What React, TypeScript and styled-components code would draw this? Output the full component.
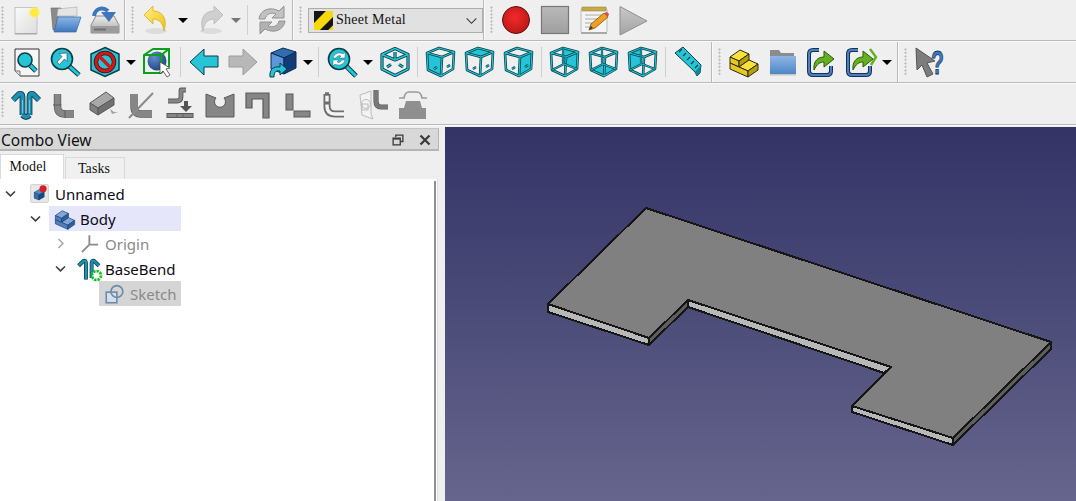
import React from "react";
import styled, { createGlobalStyle } from "styled-components";

const Global = createGlobalStyle`
	html, body {
		margin: 0;
		padding: 0;
		background: #efefef;
		overflow: hidden;
	}
	#root {
		width: 1076px;
		height: 501px;
	}
`

const Page = styled.div`
	width: 1076px;
	height: 501px;
	display: flex;
	flex-direction: column;
	background: #efefef;
	font-family: "Noto Sans", sans-serif;
	overflow: hidden;
`

const Row = styled.div<{ $h?: number }>`
	height: ${p => p.$h || 42}px;
	flex: none;
	display: flex;
	align-items: stretch;
	box-sizing: border-box;
	padding-bottom: 2px;
	box-shadow: inset 0 -1px 0 #fafafa, inset 0 -2px 0 #b9b9b9;
`

const Section = styled.div<{ $end?: number; $first?: boolean }>`
	display: flex;
	align-items: center;
	padding-left: ${p => p.$first ? 0 : 5}px;
	padding-right: ${p => p.$end || 0}px;
	border-right: ${p => p.$end !== undefined ? "1px solid #b9b9b9" : "none"};
	box-shadow: ${p => p.$end !== undefined ? "1px 0 0 #fafafa" : "none"};
`

const Handle = styled.div`
	width: 3px;
	height: 28px;
	margin: 0 3px 0 1px;
	flex: none;
	background-image: radial-gradient(circle at 1.5px 1.5px, #bdbdbd 1px, transparent 1.2px);
	background-size: 3px 3.5px;
`

const Slot = styled.div`
	width: 39px;
	height: 32px;
	flex: none;
	display: flex;
	align-items: center;
	justify-content: center;
`

const TightRow = styled(Row)`
	${Slot} {
		width: 38.7px;
	}
`

const Caret = styled.div<{ $off?: boolean }>`
	width: 14px;
	flex: none;
	display: flex;
	justify-content: center;
	&::before {
		content: "";
		border-left: 5px solid transparent;
		border-right: 5px solid transparent;
		border-top: 5px solid ${p => p.$off ? "#777" : "#000"};
	}
`

const Sep = styled.div<{ $wide?: boolean }>`
	width: 1px;
	height: 30px;
	flex: none;
	background: #cfcfcf;
	margin: 0 ${p => p.$wide ? 5 : 3}px 0 ${p => p.$wide ? 4 : 3}px;
`

const Combo = styled.div`
	width: 175px;
	height: 25px;
	margin-left: 3px;
	box-sizing: border-box;
	display: flex;
	align-items: center;
	gap: 3px;
	padding: 0 5px;
	background: #e1e1e1;
	border: 1px solid #adadad;
	font: 14px "Liberation Serif", serif;
	letter-spacing: 0.25px;
	color: #111;
`

const ComboText = styled.span`
	flex: 1;
`

const Main = styled.div`
	flex: 1;
	display: flex;
	min-height: 0;
`

const Dock = styled.div`
	width: 445px;
	flex: none;
	display: flex;
	flex-direction: column;
	padding-top: 2px;
	box-sizing: border-box;
`

const DockTitle = styled.div`
	width: 439px;
	height: 23px;
	box-sizing: border-box;
	flex: none;
	display: flex;
	align-items: center;
	background: #d8d8d8;
	border-right: 1px solid #b4b4b4;
	border-bottom: 2px solid #b4b4b4;
	border-top: 1px solid #c4c4c4;
	padding: 1px 0 0 1px;
	font-size: 15.5px;
	color: #111;
`

const DockName = styled.span`
	flex: 1;
`

const DockButton = styled.div`
	width: 27px;
	display: flex;
	justify-content: center;
`

const Tabs = styled.div`
	height: 28px;
	width: 438px;
	flex: none;
	display: flex;
	align-items: flex-end;
	font: 14px "Liberation Serif", serif;
	letter-spacing: 0.1px;
	color: #111;
`

const Tab = styled.div<{ $on?: boolean }>`
	box-sizing: border-box;
	width: ${p => p.$on ? 64 : 60}px;
	height: ${p => p.$on ? 25 : 22}px;
	margin-left: ${p => p.$on ? 0 : 1}px;
	padding-right: ${p => p.$on ? 8 : 2}px;
	display: flex;
	align-items: center;
	justify-content: center;
	background: ${p => p.$on ? "#fff" : "#f0f0f0"};
	border: 1px solid #d9d9d9;
	border-bottom: none;
`

const Tree = styled.div`
	flex: 1;
	width: 438px;
	box-sizing: border-box;
	background: #fff;
	border-right: 1px solid #dedede;
	display: flex;
	justify-content: space-between;
	padding-top: 2px;
`

const TreeList = styled.div`
	width: 181px;
	display: flex;
	flex-direction: column;
	font-size: 15px;
`

const ScrollLine = styled.div`
	width: 2px;
	margin-right: 1px;
	background: #8f8f8f;
`

const TreeRow = styled.div<{ $depth: number }>`
	height: 25px;
	display: flex;
	align-items: center;
	padding-left: ${p => p.$depth * 25}px;
`

const Arrow = styled.div`
	width: 24px;
	flex: none;
	display: flex;
	justify-content: center;
	padding-right: 3px;
	box-sizing: border-box;
`

const Item = styled.div<{ $tone?: string; $dim?: boolean }>`
	flex: 1;
	height: 25px;
	display: flex;
	align-items: center;
	white-space: nowrap;
	background: ${p => p.$tone || "transparent"};
	color: ${p => p.$dim ? "#8a8a8a" : "#0c0c14"};
`

const ItemIcon = styled.div`
	width: 31px;
	flex: none;
	display: flex;
	justify-content: center;
`

const View = styled.div`
	flex: 1;
	margin-top: 1px;
	background: linear-gradient(#333366, #65658d);
`

const ViewSvg = styled.svg`
	width: 100%;
	height: 100%;
	display: block;
`

const Svg = styled.svg.attrs({ viewBox: "0 0 32 32" })<{ $s?: number }>`
	width: ${p => p.$s || 32}px;
	height: ${p => p.$s || 32}px;
	display: block;
	flex: none;
	overflow: visible;
`

const TEAL = "#25c4d6"
const DARK = "#0b3f48"
const GRAY = "#868686"
const GRAY_D = "#5a5a5a"

// two stroke passes give the outlined pipes the icon set is made of
const Pipe = ({ d, c = TEAL, o = DARK, w = 2, e = 1.8 }: { d: string; c?: string; o?: string; w?: number; e?: number }) => (
	<>
		<path d={d} fill="none" stroke={o} strokeWidth={w + e} strokeLinejoin="round" />
		<path d={d} fill="none" stroke={c} strokeWidth={w} strokeLinejoin="round" />
	</>
)

const NewIcon = () => (
	<Svg>
		<defs>
			<linearGradient id="newPage" x1="0" y1="0" x2="1" y2="1">
				<stop offset="0" stopColor="#fafafa" />
				<stop offset="1" stopColor="#dedede" />
			</linearGradient>
			<radialGradient id="newGlow">
				<stop offset="0" stopColor="#ffef3a" />
				<stop offset="0.55" stopColor="#ffe93a" />
				<stop offset="1" stopColor="#fff3a0" stopOpacity="0" />
			</radialGradient>
		</defs>
		<rect x="4" y="3.5" width="22" height="26" fill="url(#newPage)" stroke="#c4c4c4" />
		<rect x="4" y="29" width="22" height="1.5" fill="#aaa" />
		<circle cx="23.5" cy="8.5" r="6.5" fill="url(#newGlow)" />
	</Svg>
)

const OpenIcon = () => (
	<Svg>
		<defs>
			<linearGradient id="openBlue" x1="0" y1="0" x2="0" y2="1">
				<stop offset="0" stopColor="#8bb8ea" />
				<stop offset="1" stopColor="#3f76bd" />
			</linearGradient>
		</defs>
		<path d="M1,4 H11 L13,7 H24 V12 H8 L5,26 H3 Z" fill="#8a8a8a" stroke="#666" strokeWidth="0.6" />
		<path d="M8,5 L27,3 L27,12 L7,12 Z" fill="#e4e4e4" stroke="#aaa" strokeWidth="0.6" />
		<path d="M8,13 H31 L26,28 H4 Z" fill="url(#openBlue)" stroke="#3a6aa8" strokeWidth="0.7" />
	</Svg>
)

const SaveIcon = () => (
	<Svg>
		<defs>
			<linearGradient id="saveBase" x1="0" y1="0" x2="0" y2="1">
				<stop offset="0" stopColor="#ececec" />
				<stop offset="1" stopColor="#a8a8a8" />
			</linearGradient>
		</defs>
		<path d="M2,21 L7,12 H25 L30,21 V29 H2 Z" fill="url(#saveBase)" stroke="#8c8c8c" />
		<rect x="2.5" y="22" width="27" height="7" fill="#9c9c9c" />
		<rect x="5" y="24.5" width="12" height="2" fill="#6f6f6f" />
		<path d="M5,12 C6,5 13,2 19,7" fill="none" stroke="#3e76bb" strokeWidth="4" />
		<polygon points="12,8 27,8 20,18" fill="#3e76bb" />
	</Svg>
)

const CurlArrow = ({ fill, line, flip }: { fill: string; line: string; flip?: boolean }) => (
	<g transform={flip ? "matrix(-1 0 0 1 32 0)" : undefined}>
		<ellipse cx="15" cy="27" rx="11" ry="3" fill="#000" opacity="0.08" />
		<path d="M3,11 L12,2 V7 C21,7 27,14 23,27 C22,19 18,15 12,15 V20 Z" fill={fill} stroke={line} strokeWidth="0.8" />
	</g>
)

const UndoIcon = () => (
	<Svg>
		<defs>
			<linearGradient id="undoFill" x1="0" y1="0" x2="1" y2="1">
				<stop offset="0" stopColor="#fff08a" />
				<stop offset="1" stopColor="#f0c010" />
			</linearGradient>
		</defs>
		<CurlArrow fill="url(#undoFill)" line="#d8b020" />
	</Svg>
)

const RedoIcon = () => (
	<Svg>
		<CurlArrow fill="#cfcfcf" line="#b8b8b8" flip />
	</Svg>
)

const RefreshIcon = () => {
	const d = "M2,15 C3,6 13,2 22,7 L27,2 V14 H15 L19,10 C14,8 9,10 8,15 Z"
	return (
		<Svg>
			<path d={d} fill="#c2c2c2" stroke="#929292" />
			<path d={d} fill="#b2b2b2" stroke="#929292" transform="rotate(180 15 16)" />
		</Svg>
	)
}

const HazardIcon = () => (
	<Svg $s={19}>
		<rect width="32" height="32" fill="#f5d90a" />
		<polygon points="0,0 20,0 0,20" fill="#151515" />
		<polygon points="32,10 32,32 10,32" fill="#151515" />
		<polygon points="32,24 32,32 24,32" fill="#f5d90a" />
	</Svg>
)

const ChevronIcon = () => (
	<Svg $s={11}>
		<path d="M2,10 L16,24 L30,10" fill="none" stroke="#333" strokeWidth="3" />
	</Svg>
)

const RecordIcon = () => (
	<Svg>
		<defs>
			<radialGradient id="rec" cx="0.45" cy="0.4" r="0.7">
				<stop offset="0" stopColor="#f02a2a" />
				<stop offset="1" stopColor="#b81414" />
			</radialGradient>
		</defs>
		<circle cx="16" cy="16" r="13.5" fill="url(#rec)" stroke="#5a1010" />
	</Svg>
)

const StopIcon = () => (
	<Svg>
		<defs>
			<linearGradient id="stopFill" x1="0" y1="0" x2="0" y2="1">
				<stop offset="0" stopColor="#b9b9b9" />
				<stop offset="1" stopColor="#9f9f9f" />
			</linearGradient>
		</defs>
		<rect x="2.5" y="2.5" width="27" height="27" fill="url(#stopFill)" stroke="#777" strokeWidth="1.2" />
	</Svg>
)

const MacroIcon = () => (
	<Svg>
		<rect x="3" y="4" width="26" height="25" rx="2" fill="#f4f4f4" stroke="#bbb" />
		<rect x="3" y="28" width="26" height="2" fill="#a8a8a8" />
		<rect x="4" y="3" width="24" height="4" fill="#c9a84a" stroke="#8f7a30" strokeWidth="0.5" />
		<path d="M7,11 H24 M7,15 H20 M7,19 H14 M7,23 H12" stroke="#aaa" strokeWidth="1.2" />
		<path d="M11,26 L13,20 L26,9 L30,13 L17,24 Z" fill="#f0a020" stroke="#7a5410" strokeWidth="0.8" />
		<path d="M26,9 L30,13 L31,10 L29,8 Z" fill="#d85050" />
		<path d="M11,26 L13,22 L15,24 Z" fill="#333" />
	</Svg>
)

const PlayIcon = () => (
	<Svg>
		<defs>
			<linearGradient id="playFill" x1="0" y1="0" x2="0" y2="1">
				<stop offset="0" stopColor="#c8c8c8" />
				<stop offset="1" stopColor="#a4a4a4" />
			</linearGradient>
		</defs>
		<polygon points="3,2.5 30,17 3,31" fill="url(#playFill)" stroke="#8f8f8f" />
	</Svg>
)

const Lens = ({ cx, cy, r, to }: { cx: number; cy: number; r: number; to: number }) => (
	<>
		<path d={`M${cx + r * 0.7},${cy + r * 0.7} L${to},${to}`} stroke={DARK} strokeWidth="5" />
		<path d={`M${cx + r * 0.7},${cy + r * 0.7} L${to},${to}`} stroke={TEAL} strokeWidth="3" />
		<circle cx={cx} cy={cy} r={r} fill={TEAL} stroke={DARK} strokeWidth="1.6" />
	</>
)

const ZoomPageIcon = () => (
	<Svg>
		<path d="M4,3 H28 V30 H9 L4,25 Z" fill="#f6f6f6" stroke="#333" />
		<path d="M4,25 H9 V30" fill="#ddd" stroke="#777" />
		<Lens cx={14} cy={14} r={7} to={25} />
	</Svg>
)

const ZoomArrowIcon = () => (
	<Svg>
		<Lens cx={12} cy={13} r={10.5} to={29} />
		<path d="M17,7 V15.5 L14.5,13 L9.5,18.5 L7,16 L12,10.5 L9,7.5 Z" fill="#fff" stroke="#334" strokeWidth="0.6" />
	</Svg>
)

const NoDrawIcon = () => (
	<Svg>
		<polygon points="16,1.5 30,8 30,24 16,30.5 2,24 2,8" fill={TEAL} stroke={DARK} strokeWidth="1.5" />
		<circle cx="16" cy="16" r="9" fill="none" stroke="#3a1414" strokeWidth="4.4" />
		<circle cx="16" cy="16" r="9" fill="none" stroke="#d01818" strokeWidth="3" />
		<path d="M10,10 L22,22" stroke="#d01818" strokeWidth="3.4" />
	</Svg>
)

const BoxSelectIcon = () => (
	<Svg>
		<defs>
			<radialGradient id="ball" cx="0.35" cy="0.3" r="0.8">
				<stop offset="0" stopColor="#5f8fd0" />
				<stop offset="1" stopColor="#1c3f7a" />
			</radialGradient>
		</defs>
		<circle cx="15" cy="15" r="9.5" fill="url(#ball)" />
		<path d="M2,9 L11,3 H27 V20 L19,27 H2 Z M2,9 H19 V27 M19,9 L27,3" fill="none" stroke="#0aa01a" strokeWidth="2" />
		<polygon points="18,16 18,28 21,25 25,31 28,29 24,23 28,22" fill="#fff" stroke="#444" strokeWidth="0.8" />
	</Svg>
)

const BackIcon = () => (
	<Svg>
		<polygon points="2,16 16,3 16,10 30,10 30,21 16,21 16,29" fill={TEAL} stroke={DARK} strokeWidth="1" />
	</Svg>
)

const ForwardIcon = () => (
	<Svg>
		<polygon points="30,16 16,3 16,10 2,10 2,21 16,21 16,29" fill="#b8b8b8" stroke="#9c9c9c" />
	</Svg>
)

const CubeSwapIcon = () => (
	<Svg>
		<polygon points="5,7 17,2 30,6 18,12" fill="#2f6db0" stroke="#0c2a55" />
		<polygon points="5,7 18,12 18,28 5,23" fill="#5d97da" stroke="#0c2a55" />
		<polygon points="18,12 30,6 30,22 18,28" fill="#123c78" stroke="#0c2a55" />
		<path d="M4,31 C3,23 8,20 14,21 V17 L21,23 L14,29 V25 C10,24 8,26 8,31 Z" fill={TEAL} stroke={DARK} />
	</Svg>
)

const ZoomRefreshIcon = () => (
	<Svg>
		<Lens cx={13} cy={13} r={10.5} to={30} />
		<path d="M7,12 C8,7 14,6 17,8 L19,6 V12 H13 L15,10 C13,9 11,10 10,12 Z" fill="#fff" stroke="#244" strokeWidth="0.4" />
		<path d="M19,14 C18,19 12,20 9,18 L7,20 V14 H13 L11,16 C13,17 15,16 16,14 Z" fill="#fff" stroke="#244" strokeWidth="0.4" />
	</Svg>
)

const IsoCubeIcon = () => (
	<Svg>
		<Pipe d="M16,2.5 L29,8.5 V23 L16,29.5 L3,23 V8.5 Z M3,8.5 L16,14 L29,8.5 M16,14 V6" w={1.4} />
		<Pipe d="M8,21 L12,18.5 M24,21 L20,18.5" w={1.4} />
	</Svg>
)

type Face = "front" | "top" | "right" | "rear" | "bottom" | "left"

const FACES: Record<Face, string> = {
	front: "2,7 17,11 16,30 3,24",
	top: "2,7 14,2 29,6 17,11",
	right: "17,11 29,6 28,23 16,30",
	rear: "14,2 29,6 28,23 15,18",
	bottom: "3,24 15,18 28,23 16,30",
	left: "2,7 14,2 15,18 3,24",
}

const CubeFaceIcon = ({ face }: { face: Face }) => {
	const back = face === "front" || face === "top" || face === "right"
	return (
		<Svg>
			<polygon points={FACES[face]} fill={TEAL} />
			<Pipe d="M2,7 L14,2 L29,6 L28,23 L16,30 L3,24 Z M2,7 L17,11 L29,6 M17,11 L16,30" w={1.1} e={1.5} />
			{back
				? <Pipe d="M22,21 L25,19 M9,23 L12,21" w={1} e={1.4} />
				: <Pipe d="M14,2 V18 M3,24 L15,18 L28,23" w={1} e={1.2} />}
		</Svg>
	)
}

const RulerIcon = () => (
	<Svg>
		<polygon points="2,7 10,1 28,19 27,27 24,30 22,26" fill={TEAL} stroke={DARK} />
		<path d="M9,3 L6,6 M13,7 L10,10 M17,11 L14,14 M21,15 L18,18 M25,19 L22,22" stroke={DARK} strokeWidth="1.2" />
		<polygon points="22,26 28,19 27,27 24,30" fill="#0e8796" />
	</Svg>
)

const PartIcon = ({ s, top = "#f6e23a", left = "#e6c820", right = "#b89f10", line = "#2a2a10" }: {
	s?: number; top?: string; left?: string; right?: string; line?: string
}) => (
	<Svg $s={s}>
		<polygon points="2,11 12,4 21,8 11,15" fill={top} stroke={line} />
		<polygon points="2,11 11,15 11,21 2,17" fill={left} stroke={line} />
		<polygon points="11,15 21,8 21,14 11,21" fill={right} stroke={line} />
		<polygon points="11,21 21,14 30,18 20,25" fill={top} stroke={line} />
		<polygon points="2,17 11,21 20,25 20,31 2,23" fill={left} stroke={line} />
		<polygon points="20,25 30,18 30,24 20,31" fill={right} stroke={line} />
	</Svg>
)

const FolderIcon = () => (
	<Svg>
		<defs>
			<linearGradient id="folderBlue" x1="0" y1="0" x2="0" y2="1">
				<stop offset="0" stopColor="#8db6e6" />
				<stop offset="1" stopColor="#4f86c6" />
			</linearGradient>
		</defs>
		<path d="M3,4 H12 L14,7 H27 V12 H3 Z" fill="#8c8c8c" />
		<rect x="3" y="10" width="26" height="18" fill="url(#folderBlue)" />
		<rect x="3" y="28" width="26" height="1.5" fill="#c5c5c5" />
	</Svg>
)

const ExportIcon = ({ more }: { more?: boolean }) => (
	<Svg>
		<path d="M13,4 H7 Q3,4 3,8 V25 Q3,29 7,29 H21 Q25,29 25,25 V20" fill="none" stroke="#13325a" strokeWidth="4" />
		<path d="M13,4 H7 Q3,4 3,8 V25 Q3,29 7,29 H21 Q25,29 25,25 V20" fill="none" stroke="#4d7fbf" strokeWidth="2" />
		<path d="M8,24 C7,15 12,11 18,11 V5 L28,13 L18,21 V16 C14,16 11,18 8,24 Z" fill="#63b020" stroke="#2d5a08" />
		{more && <path d="M25,3 L31,11 L26,19" fill="none" stroke="#63b020" strokeWidth="2.4" />}
	</Svg>
)

const HelpMark = styled.text`
	font: bold 34px "Liberation Sans", sans-serif;
	fill: #3f78b8;
	stroke: #16365f;
	stroke-width: 0.8px;
`

const HelpIcon = () => (
	<Svg>
		<polygon points="2,2 3,24 8,19 13,31 19,28 13,17 21,15" fill="#7d7d7d" stroke="#555" />
		<HelpMark x="17" y="28" textLength="13" lengthAdjust="spacingAndGlyphs">?</HelpMark>
	</Svg>
)

const BendIcon = ({ s }: { s?: number }) => (
	<Svg $s={s}>
		<Pipe d="M12.5,27 V9 Q12.5,5 9,6 L3,12" w={4} c="#1f8fb5" />
		<Pipe d="M19.5,27 V9 Q19.5,5 23,6 L29,12" w={4} c="#1f8fb5" />
		<Pipe d="M12.5,27 Q16,31 19.5,27" w={4} c="#1f8fb5" />
		<path d="M12.5,12 V25 M19.5,12 V25" stroke="#7ed0e6" strokeWidth="0.8" />
	</Svg>
)

const LBendIcon = () => (
	<Svg>
		<Pipe d="M8.5,6 V18 Q8.5,26 16,26 H25" c={GRAY} o={GRAY_D} w={6} e={1.4} />
		<path d="M4,17 H12.5 M16,22 V30" stroke={GRAY_D} strokeWidth="1" />
	</Svg>
)

const HollowBendIcon = () => (
	<Svg>
		<Pipe d="M7,6 V18 Q7,26 15,26 H24" c="#f4f4f4" o="#6e6e6e" w={3.4} e={3.6} />
		<path d="M5,6 H9" stroke="#6e6e6e" strokeWidth="3.4" />
		<path d="M4,15 H10" stroke="#6e6e6e" strokeWidth="3" />
	</Svg>
)

const BlockIcon = () => (
	<Svg>
		<polygon points="2,15 18,4 26,10 10,20" fill="#a8a8a8" stroke={GRAY_D} />
		<polygon points="2,15 10,20 10,27 2,22" fill="#808080" stroke={GRAY_D} />
		<polygon points="10,20 26,10 26,17 10,27" fill="#707070" stroke={GRAY_D} />
		<polygon points="22,21 26,24 30,24 24,26" fill="#a0a0a0" />
	</Svg>
)

const MiterIcon = () => (
	<Svg>
		<Pipe d="M8,6 V18 Q8,26 15,26 H26" c={GRAY} o={GRAY_D} w={6} e={1.4} />
		<path d="M3,30 L27,5" stroke="#8a8a8a" strokeWidth="2" />
	</Svg>
)

const UnfoldIcon = () => (
	<Svg>
		<Pipe d="M3,13 H12 Q16,13 16,9 V2 H21" c={GRAY} o={GRAY_D} w={3} />
		<polygon points="15,18 27,18 21,24" fill="#555" />
		<rect x="19" y="13" width="4" height="6" fill="#555" />
		<rect x="2" y="25.5" width="26" height="4" fill={GRAY} stroke={GRAY_D} />
		<path d="M12,25.5 V29.5 M18,25.5 V29.5" stroke={GRAY_D} strokeWidth="0.8" />
	</Svg>
)

const NotchIcon = () => (
	<Svg>
		<path d="M2,6 L12,10 A5.5,5.5 0 1 0 20,10 L30,6 V29 H2 Z" fill={GRAY} stroke={GRAY_D} />
	</Svg>
)

const HookIcon = () => (
	<Svg>
		<path d="M4,5 H27 V30 H21 V11 H10 V20 H4 Z" fill={GRAY} stroke={GRAY_D} strokeWidth="1.2" />
	</Svg>
)

const GapIcon = () => (
	<Svg>
		<rect x="5" y="6" width="7" height="16" fill={GRAY} stroke={GRAY_D} />
		<rect x="13" y="23" width="16" height="6" fill={GRAY} stroke={GRAY_D} />
	</Svg>
)

const SketchBendIcon = () => (
	<Svg>
		<path d="M1,7 L12,3 V26 L14,31 L3,27 Z" fill="#f3f3f3" stroke="#bcbcbc" />
		<circle cx="7" cy="16" r="4.5" fill="none" stroke="#bcbcbc" />
		<rect x="3" y="16" width="6" height="6" fill="none" stroke="#bcbcbc" />
		<Pipe d="M17,2 V13 Q17,19 22,19 H29" c="#787878" o={GRAY_D} w={4} e={1.2} />
	</Svg>
)

const HatIcon = () => (
	<Svg>
		<path d="M2,10 H7 Q8,4 12,4 H20 Q24,4 25,10 H30" fill="none" stroke="#9a9a9a" strokeWidth="1.6" />
		<path d="M9,13 H23 L25,20 H29 V31 H2 V20 H7 Z" fill="#8f8f8f" />
	</Svg>
)

const RestoreIcon = () => (
	<Svg $s={12}>
		<path d="M10,8 V3 H29 V20 H24" fill="none" stroke="#3a3a3a" strokeWidth="3.5" />
		<rect x="3" y="11" width="19" height="18" fill="none" stroke="#3a3a3a" strokeWidth="3.5" />
		<path d="M3,13 H22" stroke="#3a3a3a" strokeWidth="4" />
	</Svg>
)

const CloseIcon = () => (
	<Svg $s={12}>
		<path d="M4,4 L28,28 M28,4 L4,28" stroke="#3a3a3a" strokeWidth="6" />
	</Svg>
)

const TreeArrow = ({ open, dim }: { open?: boolean; dim?: boolean }) => (
	<Svg $s={11}>
		<path
			d={open ? "M3,10 L16,23 L29,10" : "M10,3 L23,16 L10,29"}
			fill="none"
			stroke={dim ? "#a8a8a8" : "#3c3c3c"}
			strokeWidth="4.5"
		/>
	</Svg>
)

const DocIcon = () => (
	<Svg $s={19}>
		<rect x="1" y="1" width="30" height="30" rx="2" fill="#e8e8e8" stroke="#b8b8b8" />
		<polygon points="7,14 16,9 24,13 15,18" fill="#4f8fd0" stroke="#123" strokeWidth="0.6" />
		<polygon points="7,14 15,18 15,27 7,24" fill="#2f6cb0" stroke="#123" strokeWidth="0.6" />
		<polygon points="15,18 24,13 24,22 15,27" fill="#174a88" stroke="#123" strokeWidth="0.6" />
		<circle cx="22" cy="8" r="6" fill="#d81e1e" />
	</Svg>
)

const OriginIcon = () => (
	<Svg $s={20}>
		<path d="M15,2 V17 L29,17 M15,17 L3,29" fill="none" stroke="#8c8c8c" strokeWidth="3" />
	</Svg>
)

const BaseBendIcon = () => (
	<Svg $s={26}>
		<Pipe d="M11,29 V9 Q11,5 8,6 L2,12" w={3} c="#1f8fb5" />
		<Pipe d="M18,27 V9 Q18,5 21,6 L27,12" w={3} c="#1f8fb5" />
		<circle cx="24" cy="24" r="5.5" fill="#fff" stroke="#12c020" strokeWidth="3.4" strokeDasharray="3 1.2" />
	</Svg>
)

const SketchIcon = () => (
	<Svg $s={20}>
		<rect x="2" y="13" width="17" height="17" fill="#d6e0ea" stroke="#6b8cab" strokeWidth="2.6" />
		<circle cx="19" cy="12" r="9.5" fill="none" stroke="#6b8cab" strokeWidth="2.6" />
	</Svg>
)

const row1 = (
	<Row $h={42}>
		<Section $first $end={0}>
			<Handle />
			<Slot><NewIcon /></Slot>
			<Slot><OpenIcon /></Slot>
			<Slot><SaveIcon /></Slot>
		</Section>
		<Section $end={0}>
			<Handle />
			<Slot><UndoIcon /></Slot>
			<Caret />
			<Slot><RedoIcon /></Slot>
			<Caret $off />
			<Sep $wide />
			<Slot><RefreshIcon /></Slot>
		</Section>
		<Section $end={0}>
			<Handle />
			<Combo>
				<HazardIcon />
				<ComboText>Sheet Metal</ComboText>
				<ChevronIcon />
			</Combo>
		</Section>
		<Section>
			<Handle />
			<Slot><RecordIcon /></Slot>
			<Slot><StopIcon /></Slot>
			<Slot><MacroIcon /></Slot>
			<Slot><PlayIcon /></Slot>
		</Section>
	</Row>
)

const row2 = (
	<Row>
		<Section $first $end={3}>
			<Handle />
			<Slot><ZoomPageIcon /></Slot>
			<Slot><ZoomArrowIcon /></Slot>
			<Slot><NoDrawIcon /></Slot>
			<Caret />
			<Slot><BoxSelectIcon /></Slot>
			<Sep />
			<Slot><BackIcon /></Slot>
			<Slot><ForwardIcon /></Slot>
			<Slot><CubeSwapIcon /></Slot>
			<Caret />
			<Sep />
			<Slot><ZoomRefreshIcon /></Slot>
			<Caret />
			<Slot><IsoCubeIcon /></Slot>
			<Sep />
			<Slot><CubeFaceIcon face="front" /></Slot>
			<Slot><CubeFaceIcon face="top" /></Slot>
			<Slot><CubeFaceIcon face="right" /></Slot>
			<Sep />
			<Slot><CubeFaceIcon face="rear" /></Slot>
			<Slot><CubeFaceIcon face="bottom" /></Slot>
			<Slot><CubeFaceIcon face="left" /></Slot>
			<Sep />
			<Slot><RulerIcon /></Slot>
		</Section>
		<Section $end={3}>
			<Handle />
			<Slot><PartIcon /></Slot>
			<Slot><FolderIcon /></Slot>
			<Slot><ExportIcon /></Slot>
			<Slot><ExportIcon more /></Slot>
			<Caret />
		</Section>
		<Section>
			<Handle />
			<Slot><HelpIcon /></Slot>
		</Section>
	</Row>
)

const row3 = (
	<TightRow>
		<Section $first>
			<Handle />
			<Slot><BendIcon /></Slot>
			<Slot><LBendIcon /></Slot>
			<Slot><BlockIcon /></Slot>
			<Slot><MiterIcon /></Slot>
			<Slot><UnfoldIcon /></Slot>
			<Slot><NotchIcon /></Slot>
			<Slot><HookIcon /></Slot>
			<Slot><GapIcon /></Slot>
			<Slot><HollowBendIcon /></Slot>
			<Slot><SketchBendIcon /></Slot>
			<Slot><HatIcon /></Slot>
		</Section>
	</TightRow>
)

const App = () => {
	return (
		<Page>
			<Global />
			{row1}
			{row2}
			{row3}
			<Main>
				<Dock>
					<DockTitle>
						<DockName>Combo View</DockName>
						<DockButton><RestoreIcon /></DockButton>
						<DockButton><CloseIcon /></DockButton>
					</DockTitle>
					<Tabs>
						<Tab $on>Model</Tab>
						<Tab>Tasks</Tab>
					</Tabs>
					<Tree>
						<TreeList>
							<TreeRow $depth={0}>
								<Arrow><TreeArrow open /></Arrow>
								<Item>
									<ItemIcon><DocIcon /></ItemIcon>
									Unnamed
								</Item>
							</TreeRow>
							<TreeRow $depth={1}>
								<Arrow><TreeArrow open /></Arrow>
								<Item $tone="#e6e6fb">
									<ItemIcon><PartIcon s={22} top="#7ea6d8" left="#4f80bd" right="#2e5f9e" line="#1c3f70" /></ItemIcon>
									Body
								</Item>
							</TreeRow>
							<TreeRow $depth={2}>
								<Arrow><TreeArrow dim /></Arrow>
								<Item $dim>
									<ItemIcon><OriginIcon /></ItemIcon>
									Origin
								</Item>
							</TreeRow>
							<TreeRow $depth={2}>
								<Arrow><TreeArrow open /></Arrow>
								<Item>
									<ItemIcon><BaseBendIcon /></ItemIcon>
									BaseBend
								</Item>
							</TreeRow>
							<TreeRow $depth={3}>
								<Arrow />
								<Item $dim $tone="#d5d5d5">
									<ItemIcon><SketchIcon /></ItemIcon>
									Sketch
								</Item>
							</TreeRow>
						</TreeList>
						<ScrollLine />
					</Tree>
				</Dock>
				<View>
					<ViewSvg viewBox="445 127 631 374" preserveAspectRatio="none" shapeRendering="crispEdges">
						<g stroke="#161616" strokeWidth="2" strokeLinejoin="round">
							<polygon points="548,304 649,338 649,345 548,312" fill="#b8b8b8" />
							<polygon points="649,338 688,300 688,307 649,345" fill="#5e5e5e" />
							<polygon points="688,300 891,367 884,373 688,307" fill="#b8b8b8" />
							<polygon points="852,406 953,438 953,445 852,412" fill="#b8b8b8" />
							<polygon points="953,438 1051,342 1051,349 953,445" fill="#5e5e5e" />
							<polygon points="646,208 1051,342 953,438 852,406 891,367 688,300 649,338 548,304" fill="#808080" />
						</g>
					</ViewSvg>
				</View>
			</Main>
		</Page>
	)
}

export default App;
